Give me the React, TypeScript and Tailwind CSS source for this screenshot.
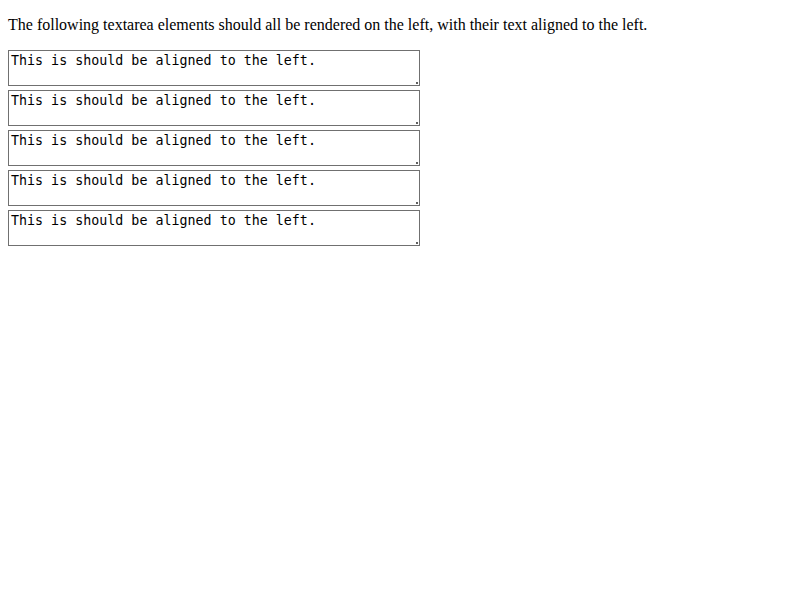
import React from "react";

export default function App() {
  const rows = [0, 1, 2, 3, 4];
  return (
    <div className="bg-white min-h-[600px] px-2 pt-4 text-black" style={{ fontFamily: '"Liberation Serif", serif' }}>
      <p className="text-[16px] leading-[18px] mb-4">
        The following textarea elements should all be rendered on the left, with their text aligned to the left.
      </p>
      <div className="flex flex-col gap-1 items-start">
        {rows.map((i) => (
          <div key={i} className="relative w-[412px] h-[36px]">
            <textarea
              readOnly
              defaultValue="This is should be aligned to the left."
              className="block w-[412px] h-[36px] resize-none border border-[#707070] px-[2px] py-[2px] text-[13.333px] leading-[15px] text-black bg-white text-left outline-none"
              style={{ fontFamily: '"DejaVu Sans Mono", monospace' }}
            />
            <span className="absolute right-[2px] bottom-[2px] w-[2px] h-[2px] bg-[#606060]" />
          </div>
        ))}
      </div>
    </div>
  );
}
